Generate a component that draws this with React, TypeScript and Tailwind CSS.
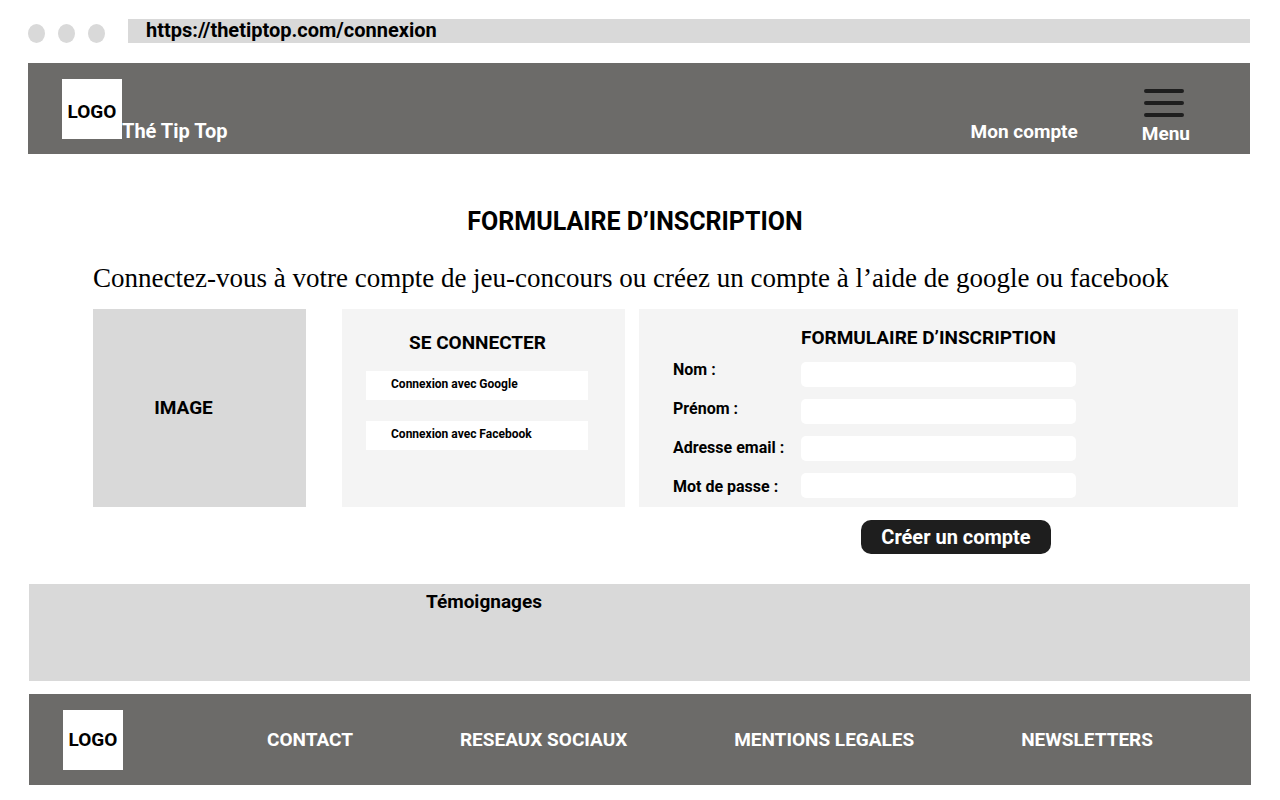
const fields = [
  { id: "nom", label: "Nom :", type: "text" },
  { id: "prenom", label: "Prénom :", type: "text" },
  { id: "email", label: "Adresse email :", type: "email" },
  { id: "password", label: "Mot de passe :", type: "password" },
];

const footerLinks = ["CONTACT", "RESEAUX SOCIAUX", "MENTIONS LEGALES", "NEWSLETTERS"];

function BrowserBar() {
  return (
    <div className="flex items-center">
      <div className="flex shrink-0 gap-[13px] pt-[5px]">
        <span className="h-[19px] w-[17px] rounded-[50%] bg-[#d9d9d9]" />
        <span className="h-[19px] w-[17px] rounded-[50%] bg-[#d9d9d9]" />
        <span className="h-[19px] w-[17px] rounded-[50%] bg-[#d9d9d9]" />
      </div>
      <div className="ml-[23px] flex h-6 flex-1 items-center bg-[#d9d9d9] pb-0.5 pl-[18px] text-xl leading-6">
        https://thetiptop.com/connexion
      </div>
    </div>
  );
}

function Logo({ className = "" }: { className?: string }) {
  return (
    <div
      className={`flex size-15 shrink-0 items-center justify-center bg-white text-[19px] leading-6 text-black ${className}`}
    >
      LOGO
    </div>
  );
}

function Header() {
  return (
    <header className="mt-5 flex h-[91px] items-end bg-[#6c6b69] pr-[60px] pl-[34px] text-[19px] leading-6 text-white">
      <div className="flex items-end pb-[15px]">
        <Logo className="pt-1.5" />
        <span className="-mb-1 text-xl leading-6">Thé Tip Top</span>
      </div>
      <a href="#compte" className="mr-16 ml-auto pb-2.5">
        Mon compte
      </a>
      <button type="button" className="flex flex-col items-start pb-2">
        <svg width="40" height="28" viewBox="0 0 40 28" className="mb-[5px] ml-0.5" aria-hidden="true">
          <path d="M2 2H38M2 14H38M2 26H38" stroke="#1e1e1e" strokeWidth="4" strokeLinecap="round" />
        </svg>
        Menu
      </button>
    </header>
  );
}

function LoginCard() {
  return (
    <section className="w-[283px] shrink-0 bg-[#f4f4f4] px-6 pt-5.5">
      <h2 className="pr-3 text-center text-[19px] leading-6">SE CONNECTER</h2>
      <div className="mt-4 mr-[13px] flex flex-col gap-[21px] text-xs">
        <button type="button" className="h-[29px] bg-white pb-1 pl-[25px] text-left">
          Connexion avec Google
        </button>
        <button type="button" className="h-[29px] bg-white pb-1 pl-[25px] text-left">
          Connexion avec Facebook
        </button>
      </div>
    </section>
  );
}

function SignupForm() {
  return (
    <form className="min-w-0 flex-1">
      <div className="h-[198px] bg-[#f4f4f4] pt-[17px] pr-[162px] pl-[34px]">
        <h2 className="pl-32 text-[19px] leading-6 whitespace-nowrap">FORMULAIRE D’INSCRIPTION</h2>
        <div className="flex">
          <div className="flex w-32 shrink-0 flex-col text-base">
            {fields.map((f) => (
              <label key={f.id} htmlFor={f.id} className="h-[39px] leading-10 whitespace-nowrap">
                {f.label}
              </label>
            ))}
          </div>
          <div className="flex min-w-0 flex-1 flex-col gap-3 pt-3">
            {fields.map((f) => (
              <input key={f.id} id={f.id} type={f.type} className="h-[25px] w-full rounded-[5px] bg-white px-2 text-sm" />
            ))}
          </div>
        </div>
      </div>
      <div className="mt-[13px] flex justify-end pr-[187px]">
        <button type="submit" className="h-[34px] w-[190px] rounded-[10px] bg-[#1e1e1e] text-xl leading-6 text-white">
          Créer un compte
        </button>
      </div>
    </form>
  );
}

export default function App() {
  return (
    <div className="min-h-screen bg-white pt-[19px] pr-[30px] pb-[15px] pl-7 font-['Roboto',sans-serif] font-bold text-black">
      <BrowserBar />
      <Header />
      <main>
        <h1 className="mt-[52px] pr-2 text-center text-[25px] leading-8">FORMULAIRE D’INSCRIPTION</h1>
        <p className="mt-6 pl-[65px] font-['Liberation_Serif',serif] text-[27px] leading-8 font-normal">
          Connectez-vous à votre compte de jeu-concours ou créez un compte à l’aide de google ou facebook
        </p>
        <div className="mt-[15px] flex items-start pr-3 pl-[65px]">
          <div className="flex h-[198px] w-[213px] shrink-0 items-center justify-center bg-[#d9d9d9] pr-8 text-[19px] leading-6">
            IMAGE
          </div>
          <div className="mr-3.5 ml-9 flex h-[198px]">
            <LoginCard />
          </div>
          <SignupForm />
        </div>
        <section className="mt-[30px] ml-px h-[97px] bg-[#d9d9d9] pt-1.5 pl-[397px]">
          <h2 className="text-[19px] leading-6">Témoignages</h2>
        </section>
      </main>
      <footer className="mt-[13px] -mr-px ml-px flex h-[91px] items-center bg-[#6c6b69] pr-[98px] pl-[34px] text-[19px] leading-6 text-white">
        <Logo />
        <nav className="ml-36 flex flex-1 justify-between">
          {footerLinks.map((l) => (
            <a key={l} href="#">
              {l}
            </a>
          ))}
        </nav>
      </footer>
    </div>
  );
}
